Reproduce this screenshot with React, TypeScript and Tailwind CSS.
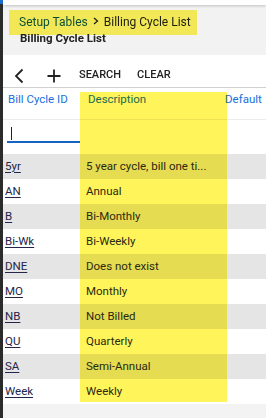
import React from "react";

const rows: [string, string][] = [
  ["5yr", "5 year cycle, bill one ti..."],
  ["AN", "Annual"],
  ["B", "Bi-Monthly"],
  ["Bi-Wk", "Bi-Weekly"],
  ["DNE", "Does not exist"],
  ["MO", "Monthly"],
  ["NB", "Not Billed"],
  ["QU", "Quarterly"],
  ["SA", "Semi-Annual"],
  ["Week", "Weekly"],
];

export default function App() {
  return (
    <div
      className="flex w-[266px] h-[418px] overflow-hidden bg-[#f3f3f3] text-[11px] text-[#333]"
      style={{ fontFamily: "Roboto, 'Liberation Sans', sans-serif" }}
    >
      <div className="w-[3px] shrink-0 flex flex-col bg-[#2b2b2b]">
        <div className="h-[4px] bg-[#1a6fd1]" />
      </div>
      <div className="flex-1 flex flex-col min-w-0">
        <div className="h-[5px] bg-white shadow-[0_1px_3px_rgba(0,0,0,0.2)] relative z-10" />
        <div className="relative h-[50px] bg-[#f2f2f2] pl-[16px] pt-[10px]">
          <div className="flex items-center gap-[5px] h-[14px] leading-[14px] text-[12px]">
            <span className="text-[#0b5394]">Setup Tables</span>
            <svg width="6" height="8" viewBox="0 0 6 8" className="mt-[-3px]">
              <path d="M1 1 L4.5 4 L1 7" fill="none" stroke="#222" strokeWidth="1.3" />
            </svg>
            <span className="text-[#222]">Billing Cycle List</span>
          </div>
          <div className="font-bold text-[#222] leading-[14px] mt-[2px] ml-[1px] text-[11.5px]">Billing Cycle List</div>
          <div className="absolute left-[6px] top-[5px] w-[188px] h-[25px] bg-[#fff55b] mix-blend-multiply" />
        </div>
        <div className="h-[33px] bg-white border-b border-[#d0d0d0] flex items-center pl-[11px] pt-[9px]">
          <svg width="10" height="16" viewBox="0 0 10 16" className="mr-[23px]">
            <path d="M8.5 1.5 L2 8 L8.5 14.5" fill="none" stroke="#222" strokeWidth="1.8" />
          </svg>
          <svg width="14" height="14" viewBox="0 0 14 14" className="mr-[18px]">
            <path d="M7 0.5 V13.5 M0.5 7 H13.5" fill="none" stroke="#222" strokeWidth="1.8" />
          </svg>
          <span className="font-medium text-[#222] mr-[16px]">SEARCH</span>
          <span className="font-medium text-[#222]">CLEAR</span>
        </div>
        <div className="relative bg-white">
          <div className="grid grid-cols-[77px_140px_1fr] h-[32px] border-b border-[#ececec] leading-[16px] pt-[3px] text-[11.5px]">
            <div className="pl-[5px] text-[#1a6fdc]">Bill Cycle ID</div>
            <div className="pl-[8px] text-[#1a6fdc]">Description</div>
            <div className="pl-[5px] text-[#1a6fdc]">Default</div>
          </div>
          <div className="grid grid-cols-[77px_140px_1fr] h-[34px]">
            <div className="pl-[4px] pt-[5px]">
              <div className="h-[18px] border-b-2 border-[#1565c0] flex items-start pl-[4px]">
                <div className="w-[1px] h-[13px] bg-[#222] mt-[2px]" />
              </div>
            </div>
            <div />
            <div />
          </div>
          {rows.map(([id, d], i) => (
            <div
              key={id}
              className={`grid grid-cols-[77px_140px_1fr] h-[25px] items-center text-[11.5px] ${i % 2 === 0 ? "bg-[#e5e5e5]" : "bg-white"}`}
            >
              <div className="pl-[2px]">
                <span className="underline text-[#23264a] underline-offset-[2px]">{id}</span>
              </div>
              <div className="pl-[6px] truncate text-[#2b2b2b]">{d}</div>
              <div />
            </div>
          ))}
          <div className="absolute left-[77px] top-[4px] w-[147px] h-[310px] bg-[#fff55b] mix-blend-multiply pointer-events-none" />
        </div>
        <div className="flex-1 bg-[#f3f3f3]" />
      </div>
    </div>
  );
}
